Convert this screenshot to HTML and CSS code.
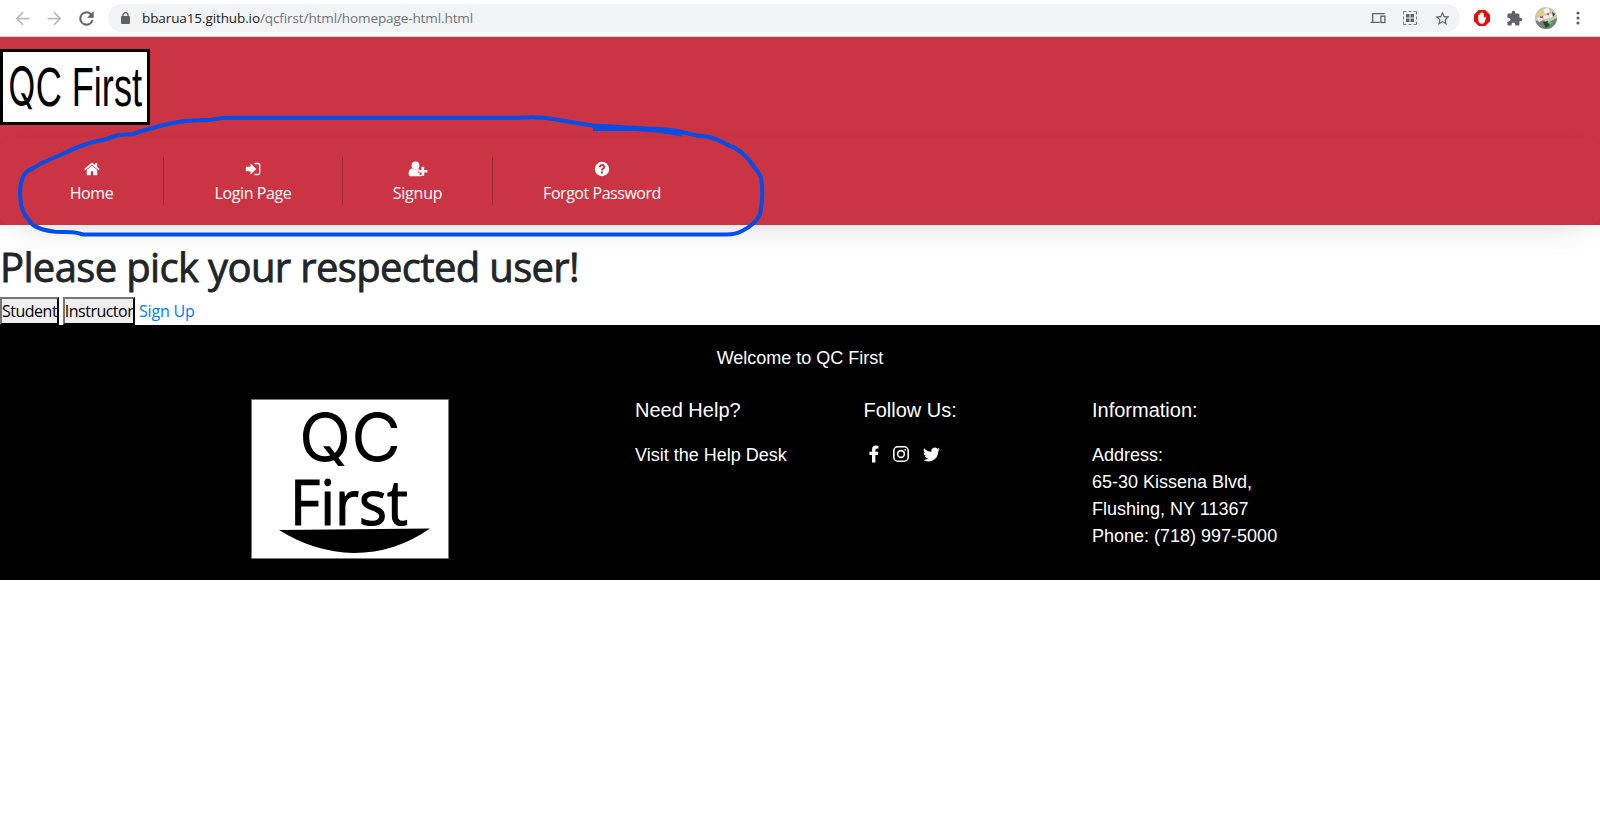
FILE: index.html
```html
<!DOCTYPE html>
<html lang="en">
<head>
<meta charset="utf-8">
<title>QC First</title>
<link rel="stylesheet" href="styles.css">
</head>
<body>
<div class="toolbar">
  <svg class="tool" viewBox="0 0 24 24" fill="#babcbe"><path d="M20 11H7.830l5.590-5.590L12 4l-8 8 8 8 1.410-1.410L7.830 13H20v-2z"/></svg>
  <svg class="tool" viewBox="0 0 24 24" fill="#babcbe"><path d="M12 4l-1.410 1.410L16.170 11H4v2h12.170l-5.580 5.590L12 20l8-8z"/></svg>
  <svg class="tool" viewBox="0 0 24 24" fill="#5f6368" stroke="#5f6368" stroke-width=".4"><path d="M17.650 6.350A7.960 7.960 0 0 0 12 4a8 8 0 1 0 7.730 10h-2.080A6 6 0 1 1 12 6c1.660 0 3.140.690 4.220 1.780L13 11h7V4z"/></svg>
  <div class="address-bar">
    <svg class="lock" viewBox="0 0 9 12"><rect y="4" width="9" height="8" rx="1" fill="#5f6368"/><path d="M2 5V3a2.500 2.300 0 0 1 5 0v2" fill="none" stroke="#5f6368" stroke-width="1.300"/></svg>
    <span class="url"><b>bbarua15.github.io</b>/qcfirst/html/homepage-html.html</span>
    <div class="bar-icons">
      <svg viewBox="0 0 16 16" width="16" height="16" fill="none" stroke="#5f6368" stroke-width="1.300"><path d="M14.500 3.700H2.700v8M.5 12.400h9.200" /><rect x="10.900" y="6.200" width="4" height="6.300"/></svg>
      <svg viewBox="0 0 16 16" width="16" height="16"><path d="M1.500 4.500v-3h3M11.500 1.500h3v3M14.500 11.500v3h-3M4.500 14.500h-3v-3M6.500 1.500h3M6.500 14.500h3M1.500 6.500v3M14.500 6.500v3" fill="none" stroke="#5f6368" stroke-width=".8"/><path d="M4 4h3.500v3.500H4zM8.500 4H12v3.500H8.500zM4 8.500h3.500V12H4zM8.500 8.500H12V12H8.500z" fill="#5f6368"/></svg>
      <svg viewBox="0 0 24 24" width="17" height="17" fill="#5f6368"><path d="M22 9.240l-7.190-.620L12 2 9.190 8.630 2 9.240l5.460 4.730L5.820 21 12 17.270 18.180 21l-1.630-7.030L22 9.240zM12 15.400l-3.760 2.270 1-4.280-3.320-2.880 4.380-.380L12 6.100l1.710 4.040 4.380.380-3.320 2.880 1 4.280L12 15.400z"/></svg>
    </div>
  </div>
  <div class="extensions">
    <svg viewBox="0 0 16 16" width="16" height="16"><path d="M4.700 0h6.600L16 4.700v6.600L11.300 16H4.700L0 11.300V4.700z" fill="#e40d0d"/><path d="M4.200 9V5.200q.6-.7 1.400 0V3.400q.6-.7 1.400 0v-.8q.8-.7 1.500 0v.8q.7-.7 1.400 0v4.800l.9-1.200q.8-.6 1.400.1l-1.400 4.600q-.6 2-2.900 2Q4.200 13.700 4.200 9z" fill="#fff"/></svg>
    <svg viewBox="0 0 24 24" width="17" height="17" fill="#5f6368"><path d="M20.500 11H19V7a2 2 0 0 0-2-2h-4V3.500a2.500 2.500 0 0 0-5 0V5H4a2 2 0 0 0-2 2v3.800h1.500a2.700 2.700 0 0 1 0 5.400H2V20c0 1.100.9 2 2 2h3.800v-1.500a2.700 2.700 0 0 1 5.400 0V22H17a2 2 0 0 0 2-2v-4h1.500a2.500 2.500 0 0 0 0-5z"/></svg>
    <svg viewBox="0 0 22 22" width="22" height="22"><defs><clipPath id="round"><circle cx="11" cy="11" r="11"/></clipPath></defs><g clip-path="url(#round)"><path fill="#c9c7ad" d="M0 0h22v22H0z"/><path fill="#71866f" d="M0 14l8-1 4 3 10-5v13H0z"/><path fill="#dfd07a" d="M1 7l6-3 3 3-5 3z"/><path fill="#f5eeee" d="M8 3l5-3 2 5-5 2zM2 11l4-1 2 3-4 2zM14 8l4-2 1 3-4 2zM8 9l5-1 1 3-5 1z"/><path fill="#bf6670" d="M5 9h3v2H5zM12 6h2v2h-2zM4 15h3v2H4z"/><path fill="#28452e" d="M8 15l5-1 2 4-4 3zM17 5l3 2-2 3z"/><path fill="#65bd8b" d="M12 15h5l-2 3z"/></g></svg>
    <svg viewBox="0 0 4 14" width="4" height="14" fill="#5f6368"><circle cx="2" cy="2" r="1.600"/><circle cx="2" cy="7" r="1.600"/><circle cx="2" cy="12" r="1.600"/></svg>
  </div>
</div>

<header class="site-header">
  <svg class="logo" viewBox="0 0 150 76"><rect x="1.500" y="1.500" width="147" height="73" fill="#fff" stroke="#000" stroke-width="3"/><text x="8" y="57" font-size="55" textLength="134" lengthAdjust="spacingAndGlyphs"><tspan class="round-q">Q</tspan>C First</text></svg>
  <nav class="nav">
    <a class="nav-item home"><svg viewBox="0 0 16 16"><path d="M8 1.500L.3 8l1.100 1.300L8 3.800l6.600 5.500L15.700 8 13.200 5.900V2h-2.100v2.100z"/><path d="M8 4.700L2.800 9v5.200h4v-3.900h2.400v3.900h4V9z"/></svg><span>Home</span></a>
    <a class="nav-item login"><svg viewBox="0 0 16 16"><path d="M.8 5.800h4.700V2.600L11.300 8l-5.800 5.400v-3.200H.8z"/><path d="M9.500 2.500H13A1.700 1.700 0 0 1 14.700 4v8a1.700 1.700 0 0 1-1.700 1.500H9.500" fill="none" stroke="#fff" stroke-width="1.300"/></svg><span>Login Page</span></a>
    <a class="nav-item signup"><svg class="wide" viewBox="0 0 20 16"><circle cx="7.500" cy="4.500" r="3.900"/><path d="M4 7.500C1.500 7.800.6 10.500.6 13c0 1.500 1 2.300 2.200 2.300h9.500c1 0 1.700-.5 1.700-1.300h-2.500v-2H9.800V8.800h1.700Q11 7.600 10.500 7.500q-3 2-6.500 0z"/><path d="M13.500 5.800h2.700V9h3.200v2.600h-3.200v3.200h-2.700v-3.200h-3.200V9h3.200z"/></svg><span>Signup</span></a>
    <a class="nav-item forgot"><svg viewBox="0 0 16 16"><circle cx="8" cy="8" r="7.200"/><path d="M5.800 6.200C6 3 10.700 3.600 10.200 6.300 9.900 7.600 8 7.700 8 9.400" fill="none" stroke="#cb3442" stroke-width="2"/><path d="M7 10.500h2v2H7z" fill="#cb3442"/></svg><span>Forgot Password</span></a>
  </nav>
</header>

<main>
  <h1>Please pick your respected user!</h1>
  <div class="actions"><button class="student">Student</button><button class="instructor">Instructor</button><a>Sign Up</a></div>
</main>

<footer>
  <p class="welcome">Welcome to QC First</p>
  <div class="columns">
    <svg class="emblem" viewBox="0 0 198 160"><path d="M.5.500h197v159H.5z" fill="#fff" stroke="#777"/><text class="round-q" x="48" y="62" font-size="66" textLength="102" lengthAdjust="spacingAndGlyphs">QC</text><text class="humanist" x="39" y="126" font-size="62" textLength="118" lengthAdjust="spacingAndGlyphs">First</text><path d="M28 131L179 129.500Q144 154 103 154 63 153 28 131z"/></svg>
    <section><h2>Need Help?</h2><p>Visit the Help Desk</p></section>
    <section><h2>Follow Us:</h2>
      <div class="social">
        <svg width="10" height="18" viewBox="0 0 10 18"><path d="M3 17.500V10H.4V6.800H3V4.500Q3 .5 6.800.5q1.600 0 2.700.2v2.800H7.900q-1.500 0-1.500 1.600v1.700h2.900L8.800 10H6.400v7.500z"/></svg>
        <svg width="16" height="16" viewBox="0 0 16 16" fill="none" stroke="#fff"><rect x=".8" y=".8" width="14.400" height="14.400" rx="4" stroke-width="1.600"/><circle cx="8" cy="8" r="3.400" stroke-width="1.600"/><circle cx="12.200" cy="3.800" r=".9" fill="#fff" stroke="none"/></svg>
        <svg width="17" height="17" viewBox="0 0 24 24"><path d="M23.950 4.570a10 10 0 0 1-2.820.770 4.960 4.960 0 0 0 2.160-2.720c-.950.550-2 .950-3.130 1.180a4.920 4.920 0 0 0-8.380 4.480C7.690 8.090 4.070 6.130 1.640 3.160a4.820 4.820 0 0 0-.670 2.480c0 1.710.870 3.210 2.190 4.100a4.900 4.900 0 0 1-2.230-.620v.060a4.920 4.920 0 0 0 3.950 4.830 5 5 0 0 1-2.210.080 4.940 4.940 0 0 0 4.600 3.420A9.870 9.870 0 0 1 0 19.540a14 14 0 0 0 7.550 2.210c9.050 0 14-7.500 14-13.980v-.640a9.940 9.940 0 0 0 2.400-2.560z"/></svg>
      </div>
    </section>
    <section><h2>Information:</h2><p>Address:<br>65-30 Kissena Blvd,<br>Flushing, NY 11367<br>Phone: (718) 997-5000</p></section>
  </div>
</footer>

<svg class="annotation" viewBox="0 0 780 130" fill="none" stroke="#004de8" stroke-width="4" stroke-linejoin="round" stroke-linecap="round"><path d="M228 5.700H517Q535 5 543 5.700 553 6.500 563 8.700L592 13.500 647 16.500Q670 17 682 20 697 24 708 24.700 718 27 730 34 735 35 738 38 746 43 755 56 760 62 761 66 764 84 760 102 756 112 742 119 735 122.500 727 122.500H83Q77 120.500 72 120.300L55 119.700Q40 118 33 113 30 110 25 103 20 95 20 80 21 60 32 57 40 51 63 42 76 35 93 30L107 27 117 23.300 133 22Q150 16 172 11.300 181 9 190 8.700L212 7.700Q218 6 228 5.700z"/><path d="M593 17H635Q660 18 682 22.500" stroke-linecap="butt"/></svg>
</body>
</html>
```
FILE: styles.css
```css
* { box-sizing: border-box; }
body { margin: 0; background: #fff; color: #212529; font: 16px/24px "Open Sans", "Noto Sans", sans-serif; }
svg { display: block; flex: none; }
.toolbar { height: 37px; display: flex; align-items: center; padding-left: 11.500px; border-bottom: 1px solid #d2d4d6; }
.tool { width: 21px; height: 21px; margin-right: 11px; }
.address-bar { width: 1352px; height: 28px; background: #f1f3f4; border-radius: 14px; display: flex; align-items: center; padding: 0 9px 0 13px; margin-left: .5px; }
.lock { width: 9px; height: 12px; }
.url { margin-left: 12px; font-size: 13.500px; line-height: 20px; letter-spacing: -.1px; color: #70757a; }
.url b { font-weight: 400; color: #202124; }
.bar-icons { display: flex; align-items: center; gap: 16px; margin-left: auto; }
.extensions { flex: 1; display: flex; align-items: center; padding-left: 14px; }
.extensions svg:nth-child(2) { margin-left: 16px; }
.extensions svg:nth-child(3) { margin-left: 12px; }
.extensions svg:nth-child(4) { margin-left: 19px; }
.site-header { height: 188px; background: #cb3442; padding-top: 12px; }
.logo { width: 150px; height: 76px; font-family: "Liberation Sans", Arial, sans-serif; }
.nav { height: 88px; margin-top: 12px; padding: 20px 0 0 20px; display: flex; border-radius: 10px; background: #cb3442; box-shadow: 0 10px 34px -15px rgba(0,0,0,.22); }
.nav-item { height: 48px; display: flex; flex-direction: column; align-items: center; color: #fff; border-right: 1px solid #982e3b; }
.nav-item svg { width: 16px; height: 16px; margin: 4px 0; fill: #fff; }
.nav-item svg.wide { width: 20px; }
.nav-item span { white-space: nowrap; letter-spacing: -.4px; }
.home { width: 144px; }
.login { width: 179px; }
.signup { width: 150px; }
.signup span { letter-spacing: -.2px; }
.forgot { width: 218px; border: 0; }
.forgot span { letter-spacing: -.46px; }
main { position: relative; height: 100px; padding-top: 18px; }
h1 { margin: 0 0 6px; font-size: 40px; line-height: 48px; font-weight: 500; letter-spacing: -.65px; -webkit-text-stroke: .8px #212529; white-space: nowrap; }
.actions { display: flex; height: 28px; align-items: center; }
button { height: 28px; padding: 0; font: inherit; line-height: 24px; letter-spacing: -.48px; color: #000; background: #efefef; border: 2px outset #767676; border-right-color: #212529; border-bottom-color: #212529; white-space: nowrap; display: flex; justify-content: center; }
.student { width: 59px; }
.instructor { width: 72px; margin: 0 4px; letter-spacing: -.52px; }
.actions a { color: #007bff; letter-spacing: -.2px; }
footer { height: 255px; background: #000; color: #fff; padding-top: 20px; font: 18px/27px "Liberation Sans", Arial, sans-serif; }
footer p { margin: 0; }
.welcome { text-align: center; }
.columns { display: grid; grid-template-columns: 384px 228.500px 228.500px 278px; padding: 27px 0 0 251px; }
.emblem { width: 198px; height: 160px; }
.round-q { font-family: Inter, sans-serif; }
.humanist { font-family: "Open Sans", sans-serif; stroke: #000; stroke-width: 1.200px; }
h2 { font-size: 20px; line-height: 24px; font-weight: 400; margin: -1px 0 20px; }
.social { display: flex; align-items: center; height: 24px; padding-left: 5px; fill: #fff; }
.social svg:nth-child(2) { margin-left: 14px; }
.social svg:nth-child(3) { margin-left: 14px; }
.annotation { position: absolute; left: 0; top: 112px; width: 780px; height: 130px; pointer-events: none; }
```
